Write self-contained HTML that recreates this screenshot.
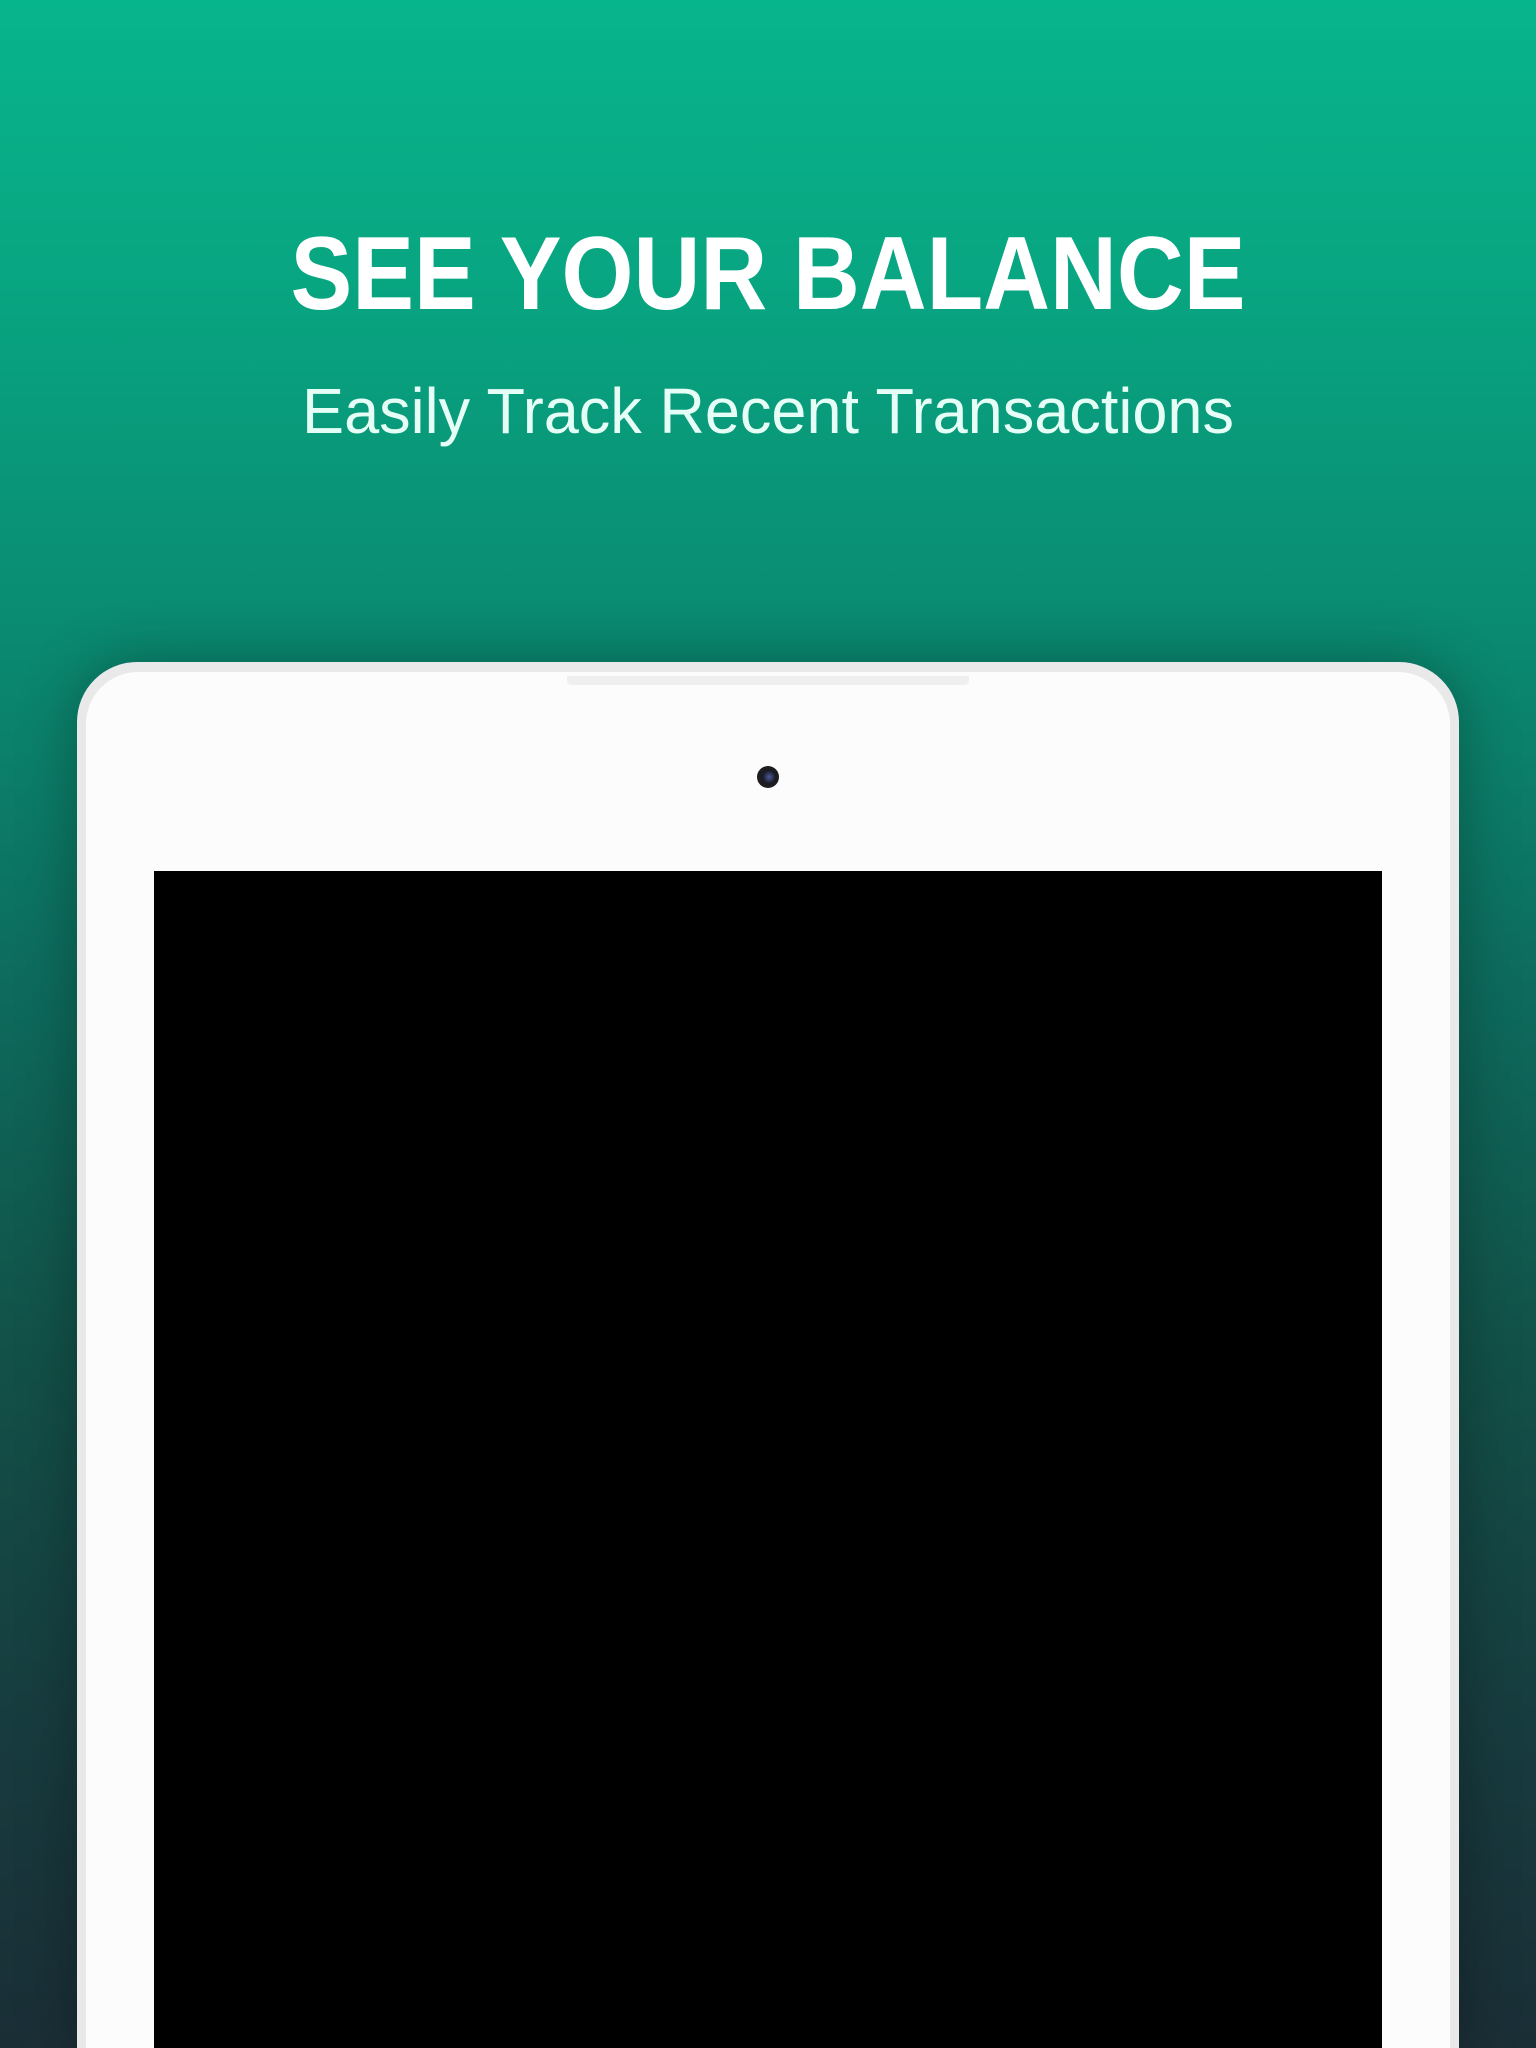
<!DOCTYPE html>
<html><head><style>
html,body{margin:0;padding:0;width:1536px;height:2048px;overflow:hidden}
#w{position:relative;width:1536px;height:2048px;overflow:hidden;font-family:"Liberation Sans",sans-serif;
background:linear-gradient(180deg,#07b58c 0%,#08a581 14%,#0a8c72 30%,#0d6b5d 48%,#125148 66%,#173c3f 84%,#1a2e36 100%);}
.h1{position:absolute;top:214px;left:0;width:1536px;text-align:center;color:#fff;font-weight:bold;font-size:104px;line-height:120px;transform:scaleX(0.89)}
.h2{position:absolute;top:371px;left:0;width:1536px;text-align:center;color:#e6fff6;font-size:64px;line-height:80px;transform:scaleX(0.985)}
.tab{position:absolute;left:77px;top:662px;width:1382px;height:1386px;background:#e9e9e9;border-radius:60px 60px 0 0;box-shadow:0 0 60px rgba(0,0,0,0.3)}
.in{position:absolute;left:86px;top:672px;width:1364px;height:1376px;background:#fcfcfc;border-radius:52px 52px 0 0}
.notch{position:absolute;left:567px;top:676px;width:402px;height:9px;background:#efefef;border-radius:0 0 4px 4px}
.cam{position:absolute;left:757px;top:766px;width:22px;height:22px;border-radius:50%;background:radial-gradient(circle at 55% 50%,#4a5a9a 0,#1a1a22 40%,#222 100%)}
.scr{position:absolute;left:154px;top:871px;width:1228px;height:1177px;background:#000}
</style></head><body><div id="w">
<div class="h1">SEE YOUR BALANCE</div>
<div class="h2">Easily Track Recent Transactions</div>
<div class="tab"></div><div class="in"></div><div class="notch"></div><div class="cam"></div><div class="scr"></div>
</div></body></html>
